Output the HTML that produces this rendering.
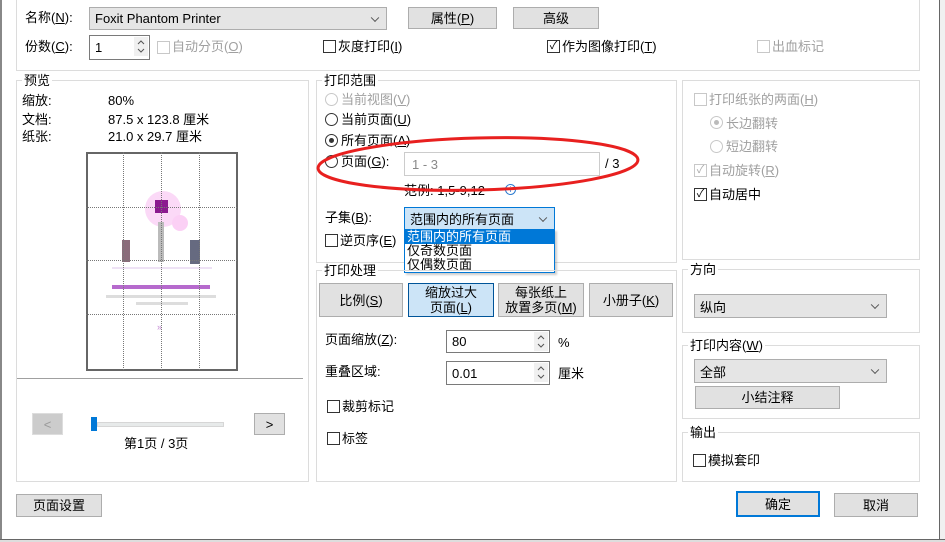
<!DOCTYPE html>
<html><head><meta charset="utf-8"><style>
*{box-sizing:border-box;margin:0;padding:0}
body{width:945px;height:542px;background:#fff;position:relative;overflow:hidden;font-family:"Liberation Sans","Noto Sans CJK SC",sans-serif;font-size:13px;color:#000}
.a{position:absolute;white-space:nowrap;line-height:16px}
.gb{position:absolute;border:1px solid #dcdcdc}
.gt{position:absolute;background:#fff;padding:0 2px;line-height:16px}
.btn{position:absolute;background:#e1e1e1;border:1px solid #adadad;text-align:center;display:flex;align-items:center;justify-content:center;line-height:15px}
.btn2{position:absolute;background:#e1e1e1;border:1px solid #adadad;text-align:center;line-height:15px;padding-top:1px;white-space:nowrap}
.cb{position:absolute;width:13px;height:13px;border:1px solid #333;background:#fff}
.rb{position:absolute;width:13px;height:13px;border:1px solid #333;border-radius:50%;background:#fff}
.dis{color:#a0a0a0}
.dis.cb,.dis.rb{border-color:#c8c8c8}
.combo{position:absolute;background:#e5e5e5;border:1px solid #adadad;padding-left:5px;display:flex;align-items:center}
.chev{position:absolute;right:8px;top:50%;width:6px;height:6px;border-right:1px solid #555;border-bottom:1px solid #555;transform:translateY(-70%) rotate(45deg)}
.spin{position:absolute;border:1px solid #7a7a7a;background:#fff;padding-left:5px;display:flex;align-items:center}
.sa{position:absolute;right:1px;top:1px;width:14px;height:19px;background:#f0f0f0}
.hv{position:absolute;top:152px;height:218px;border-left:1px dotted #777}
.hh{position:absolute;left:86px;width:151px;border-top:1px dotted #777}
</style></head><body>
<div style="position:absolute;left:0;top:0;width:2px;height:542px;background:#888"></div>
<div style="position:absolute;left:939px;top:0;width:6px;height:542px;background:#f0f0f0;border-left:1px solid #666"></div>
<div style="position:absolute;left:0;top:539px;width:945px;height:3px;background:#ddd;border-top:1px solid #666"></div>

<div class="gb" style="left:16px;top:-2px;width:904px;height:73px"></div>
<div class="a" style="left:25px;top:10px">名称(<u>N</u>):</div>
<div class="combo" style="left:89px;top:7px;width:298px;height:23px">Foxit Phantom Printer<div class="chev"></div></div>
<div class="btn" style="left:408px;top:7px;width:89px;height:22px">属性(<u>P</u>)</div>
<div class="btn" style="left:513px;top:7px;width:86px;height:22px">高级</div>
<div class="a" style="left:25px;top:39px">份数(<u>C</u>):</div>
<div class="spin" style="left:89px;top:35px;width:61px;height:25px">1<svg class="sa" viewBox="0 0 14 19"><path d="M4 7l3-3 3 3M4 12l3 3 3-3" fill="none" stroke="#555"/></svg></div>
<div class="cb dis" style="left:157px;top:41px"></div><div class="a dis" style="left:172px;top:39px">自动分页(<u>O</u>)</div>
<div class="cb" style="left:323px;top:40px"></div><div class="a" style="left:338px;top:39px">灰度打印(<u>I</u>)</div>
<div class="cb" style="left:547px;top:40px;font-size:11px;line-height:11px;text-align:center">✓</div><div class="a" style="left:562px;top:39px">作为图像打印(<u>T</u>)</div>
<div class="cb dis" style="left:757px;top:40px"></div><div class="a dis" style="left:772px;top:39px">出血标记</div>

<div class="gb" style="left:16px;top:80px;width:293px;height:402px"></div>
<div class="gt" style="left:22px;top:73px">预览</div>
<div class="a" style="left:22px;top:93px">缩放:</div><div class="a" style="left:108px;top:93px">80%</div>
<div class="a" style="left:22px;top:112px">文档:</div><div class="a" style="left:108px;top:112px">87.5 x 123.8 厘米</div>
<div class="a" style="left:22px;top:129px">纸张:</div><div class="a" style="left:108px;top:129px">21.0 x 29.7 厘米</div>
<div style="position:absolute;left:86px;top:152px;width:152px;height:219px;border:2px solid #666;background:#fff"></div>
<div style="position:absolute;left:145px;top:191px;width:36px;height:36px;border-radius:50%;background:#fbd9f7"></div>
<div style="position:absolute;left:172px;top:215px;width:16px;height:16px;border-radius:50%;background:#fbd0f5"></div>
<div style="position:absolute;left:155px;top:200px;width:13px;height:13px;background:#8b1a8f"></div>
<div style="position:absolute;left:158px;top:222px;width:6px;height:40px;background:#bbb"></div>
<div style="position:absolute;left:122px;top:240px;width:8px;height:22px;background:#8a6b7a"></div>
<div style="position:absolute;left:190px;top:240px;width:10px;height:24px;background:#666a80"></div>
<div style="position:absolute;left:112px;top:267px;width:100px;height:2px;background:#eee2f5"></div>
<div style="position:absolute;left:112px;top:285px;width:98px;height:4px;background:#b66acd"></div>
<div style="position:absolute;left:106px;top:295px;width:110px;height:3px;background:#ddd"></div>
<div style="position:absolute;left:136px;top:302px;width:52px;height:3px;background:#ddd"></div>
<div style="position:absolute;left:157px;top:323px;width:8px;height:8px;color:#c48ad4;font-size:9px;line-height:8px">»</div>
<div class="hv" style="left:123px"></div><div class="hv" style="left:161px"></div><div class="hv" style="left:199px"></div>
<div class="hh" style="top:207px"></div><div class="hh" style="top:260px"></div><div class="hh" style="top:314px"></div>
<div style="position:absolute;left:17px;top:378px;width:286px;height:1px;background:#a0a0a0"></div>
<div class="btn" style="left:32px;top:413px;width:31px;height:22px;background:#ccc;border-color:#ddd;color:#999">&lt;</div>
<div style="position:absolute;left:97px;top:422px;width:127px;height:5px;background:#e7eaea;border:1px solid #d6d6d6"></div>
<div style="position:absolute;left:91px;top:417px;width:6px;height:14px;background:#0078d7"></div>
<div class="btn" style="left:254px;top:413px;width:31px;height:22px">&gt;</div>
<div class="a" style="left:124px;top:436px">第1页 / 3页</div>
<div class="btn" style="left:16px;top:494px;width:86px;height:23px">页面设置</div>

<div class="gb" style="left:316px;top:80px;width:361px;height:183px"></div>
<div class="gt" style="left:322px;top:73px">打印范围</div>
<div class="rb dis" style="left:325px;top:93px"></div><div class="a dis" style="left:341px;top:92px">当前视图(<u>V</u>)</div>
<div class="rb" style="left:325px;top:113px"></div><div class="a" style="left:341px;top:112px">当前页面(<u>U</u>)</div>
<div class="rb" style="left:325px;top:134px"><div style="position:absolute;left:3px;top:3px;width:5px;height:5px;border-radius:50%;background:#333"></div></div><div class="a" style="left:341px;top:133px">所有页面(<u>A</u>)</div>
<div class="rb" style="left:325px;top:155px"></div><div class="a" style="left:341px;top:154px">页面(<u>G</u>):</div>
<div style="position:absolute;left:404px;top:152px;width:196px;height:24px;border:1px solid #ccc;background:#fff;color:#888;padding:4px 0 0 7px">1 - 3</div>
<div class="a" style="left:605px;top:156px">/ 3</div>
<div class="a" style="left:404px;top:183px">范例: 1,5-9,12</div>
<div style="position:absolute;left:505px;top:184px;width:11px;height:11px;border:1px solid #2b7bd0;border-radius:50%;color:#2b7bd0;font-size:8px;line-height:9px;text-align:center">i</div>
<div class="a" style="left:325px;top:210px">子集(<u>B</u>):</div>
<div class="combo" style="left:404px;top:207px;width:151px;height:23px;background:#cce4f7;border-color:#0078d7">范围内的所有页面<div class="chev"></div></div>
<div class="cb" style="left:325px;top:234px"></div><div class="a" style="left:340px;top:233px">逆页序(<u>E</u>)</div>
<div style="position:absolute;left:404px;top:229px;width:151px;height:44px;background:#fff;border:1px solid #0078d7;box-shadow:2px 2px 2px rgba(0,0,0,.2)">
<div style="background:#0078d7;color:#fff;height:14px;line-height:14px;padding-left:2px">范围内的所有页面</div>
<div style="height:14px;line-height:14px;padding-left:2px">仅奇数页面</div>
<div style="height:14px;line-height:14px;padding-left:2px">仅偶数页面</div></div>
<svg style="position:absolute;left:0;top:0" width="945" height="542"><ellipse cx="478" cy="164" rx="160" ry="26" fill="none" stroke="#e8201f" stroke-width="3" transform="rotate(-1.5 478 164)"/></svg>

<div class="gb" style="left:316px;top:270px;width:361px;height:212px"></div>
<div class="gt" style="left:322px;top:263px">打印处理</div>
<div class="btn" style="left:319px;top:283px;width:84px;height:34px">比例(<u>S</u>)</div>
<div class="btn2" style="left:408px;top:283px;width:86px;height:34px;background:#cce4f7;border-color:#005499">缩放过大<br>页面(<u>L</u>)</div>
<div class="btn2" style="left:498px;top:283px;width:86px;height:34px">每张纸上<br>放置多页(<u>M</u>)</div>
<div class="btn" style="left:589px;top:283px;width:84px;height:34px">小册子(<u>K</u>)</div>
<div class="a" style="left:325px;top:332px">页面缩放(<u>Z</u>):</div>
<div class="spin" style="left:446px;top:330px;width:104px;height:23px">80<svg class="sa" viewBox="0 0 14 19"><path d="M4 7l3-3 3 3M4 12l3 3 3-3" fill="none" stroke="#555"/></svg></div>
<div class="a" style="left:558px;top:335px">%</div>
<div class="a" style="left:325px;top:364px">重叠区域:</div>
<div class="spin" style="left:446px;top:361px;width:104px;height:24px">0.01<svg class="sa" viewBox="0 0 14 19"><path d="M4 7l3-3 3 3M4 12l3 3 3-3" fill="none" stroke="#555"/></svg></div>
<div class="a" style="left:558px;top:366px">厘米</div>
<div class="cb" style="left:327px;top:400px"></div><div class="a" style="left:342px;top:399px">裁剪标记</div>
<div class="cb" style="left:327px;top:432px"></div><div class="a" style="left:342px;top:431px">标签</div>

<div class="gb" style="left:682px;top:80px;width:238px;height:180px"></div>
<div class="cb dis" style="left:694px;top:93px"></div><div class="a dis" style="left:709px;top:92px">打印纸张的两面(<u>H</u>)</div>
<div class="rb dis" style="left:710px;top:116px"><div style="position:absolute;left:3px;top:3px;width:5px;height:5px;border-radius:50%;background:#bbb"></div></div><div class="a dis" style="left:726px;top:116px">长边翻转</div>
<div class="rb dis" style="left:710px;top:140px"></div><div class="a dis" style="left:726px;top:139px">短边翻转</div>
<div class="cb dis" style="left:694px;top:164px;font-size:11px;line-height:11px;text-align:center;color:#aaa">✓</div><div class="a dis" style="left:709px;top:163px">自动旋转(<u>R</u>)</div>
<div class="cb" style="left:694px;top:188px;font-size:11px;line-height:11px;text-align:center">✓</div><div class="a" style="left:709px;top:187px">自动居中</div>

<div class="gb" style="left:682px;top:269px;width:238px;height:64px"></div>
<div class="gt" style="left:688px;top:262px">方向</div>
<div class="combo" style="left:694px;top:294px;width:193px;height:24px">纵向<div class="chev"></div></div>
<div class="gb" style="left:682px;top:345px;width:238px;height:74px"></div>
<div class="gt" style="left:688px;top:338px">打印内容(<u>W</u>)</div>
<div class="combo" style="left:694px;top:359px;width:193px;height:24px">全部<div class="chev"></div></div>
<div class="btn" style="left:695px;top:386px;width:145px;height:23px">小结注释</div>
<div class="gb" style="left:682px;top:432px;width:238px;height:50px"></div>
<div class="gt" style="left:688px;top:425px">输出</div>
<div class="cb" style="left:693px;top:454px"></div><div class="a" style="left:708px;top:453px">模拟套印</div>
<div class="btn" style="left:736px;top:491px;width:84px;height:26px;border:2px solid #0078d7">确定</div>
<div class="btn" style="left:834px;top:493px;width:84px;height:24px">取消</div>
</body></html>
